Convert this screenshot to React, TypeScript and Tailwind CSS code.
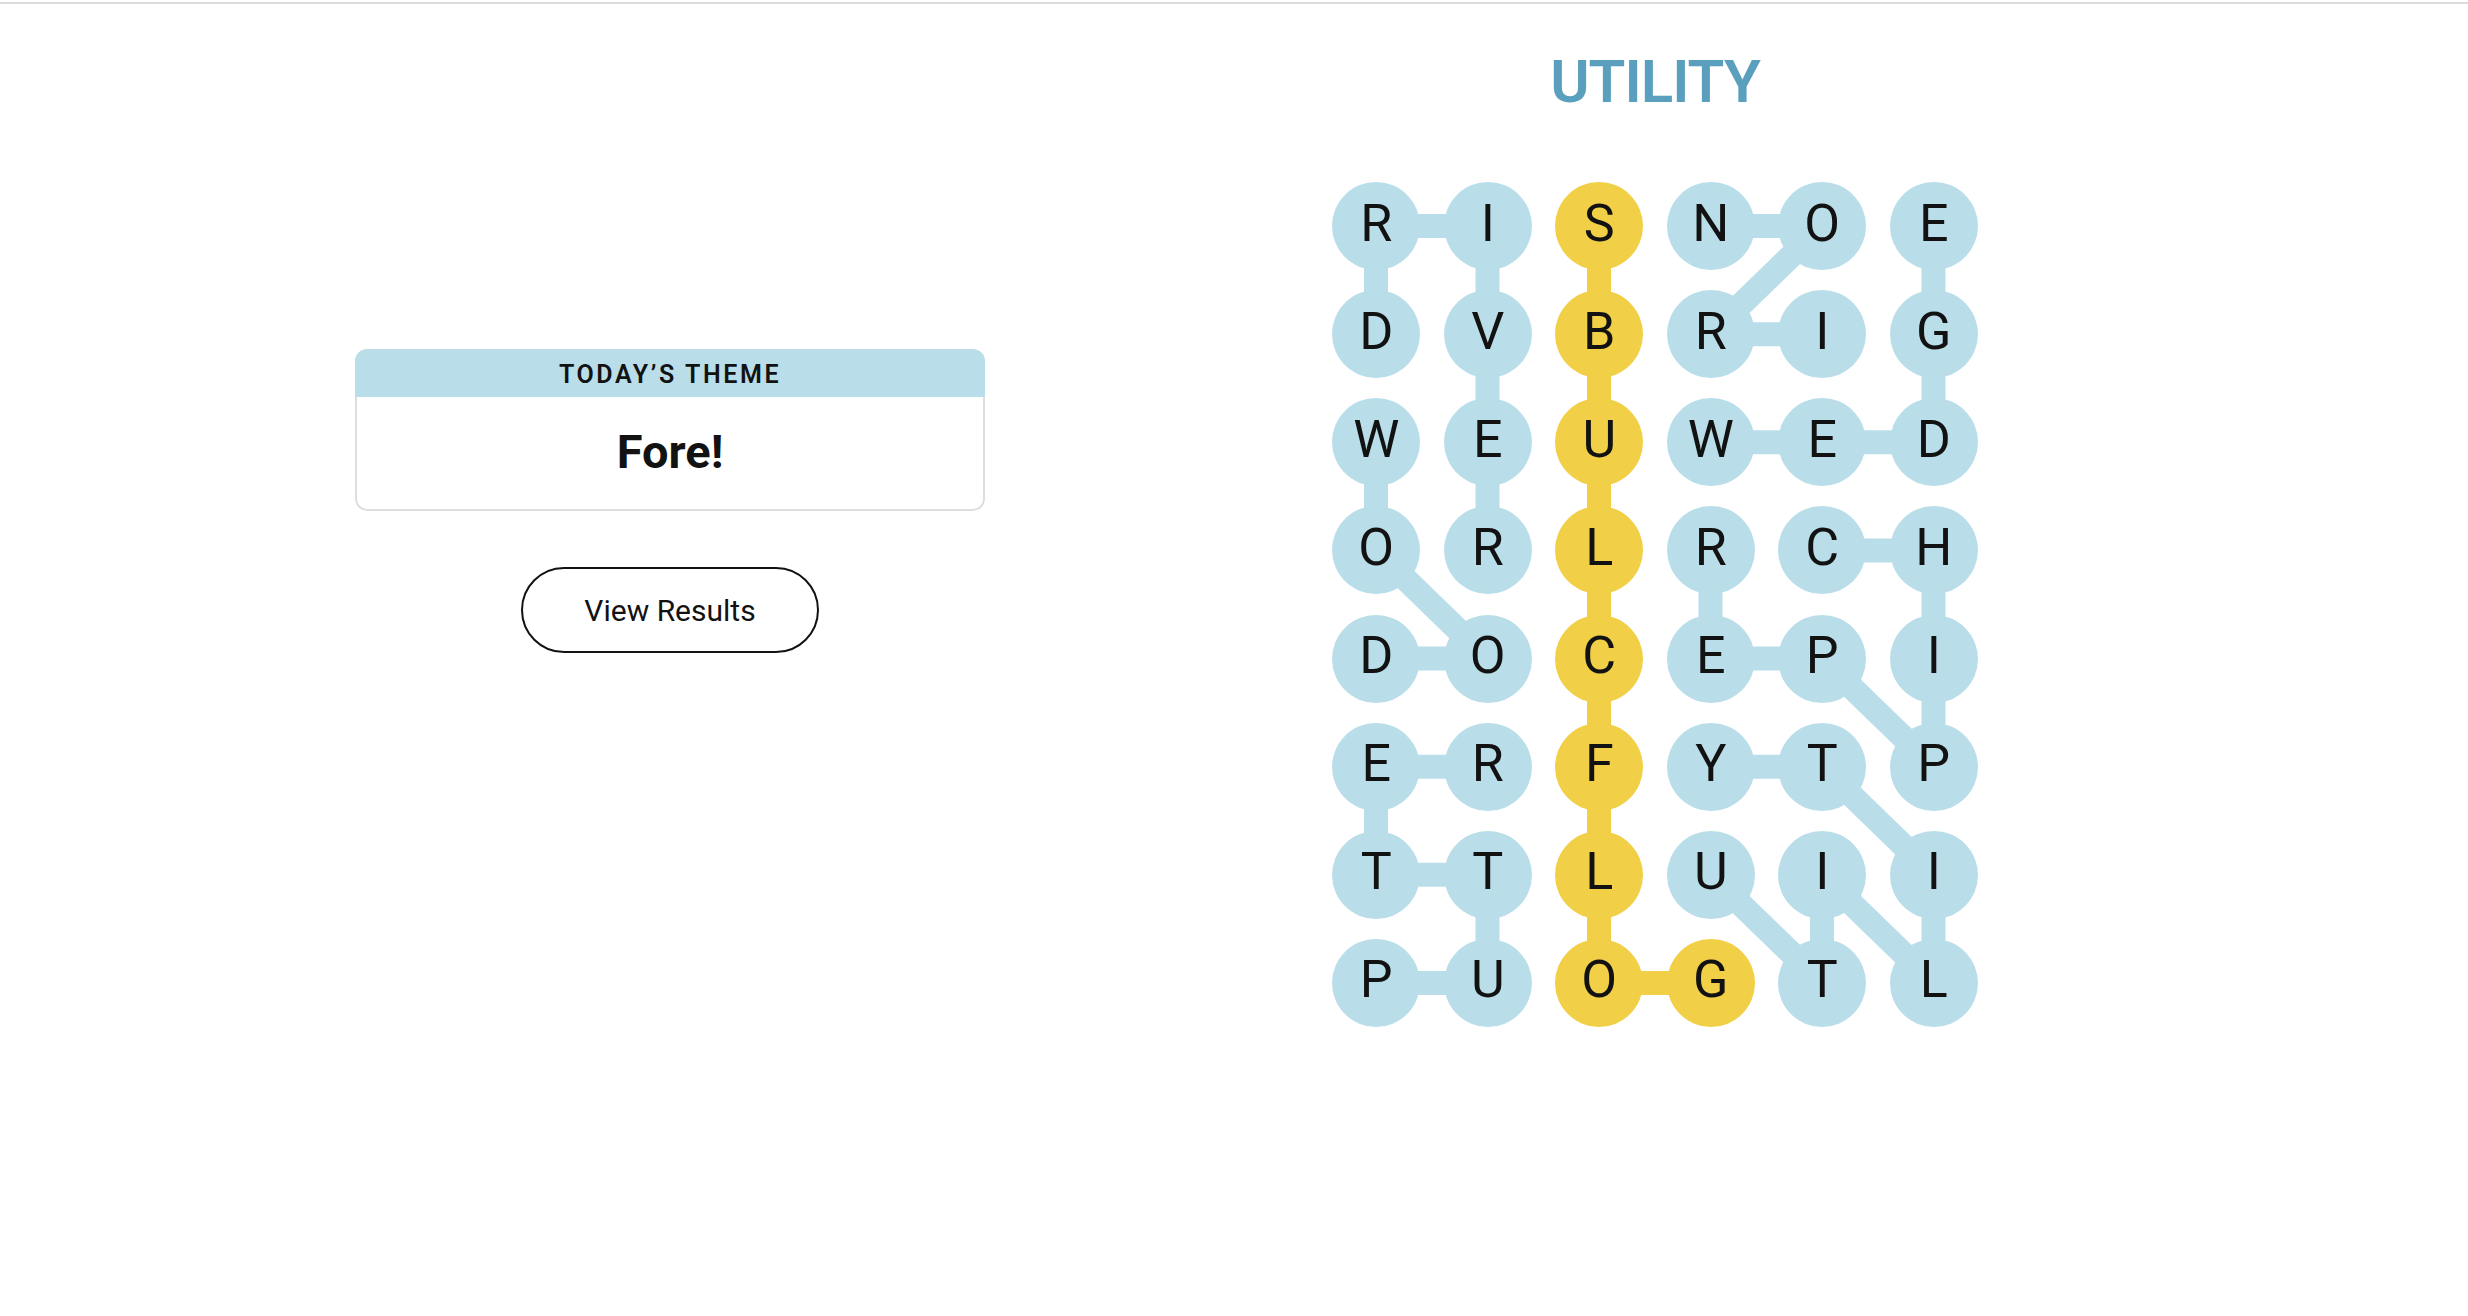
const rows = ["RISNOE", "DVBRIG", "WEUWED", "ORLRCH", "DOCEPI", "ERFYTP", "TTLUII", "PUOGTL"];

const spangram = ["0,2", "1,2", "2,2", "3,2", "4,2", "5,2", "6,2", "7,2", "7,3"];

// [row, col, row, col]
const blueLinks = [
  [1, 0, 0, 0], [0, 0, 0, 1], [0, 1, 1, 1], [1, 1, 2, 1], [2, 1, 3, 1],
  [2, 0, 3, 0], [3, 0, 4, 1], [4, 1, 4, 0],
  [7, 0, 7, 1], [7, 1, 6, 1], [6, 1, 6, 0], [6, 0, 5, 0], [5, 0, 5, 1],
  [1, 4, 1, 3], [1, 3, 0, 4], [0, 4, 0, 3],
  [2, 3, 2, 4], [2, 4, 2, 5], [2, 5, 1, 5], [1, 5, 0, 5],
  [3, 4, 3, 5], [3, 5, 4, 5], [4, 5, 5, 5], [5, 5, 4, 4], [4, 4, 4, 3], [4, 3, 3, 3],
  [6, 3, 7, 4], [7, 4, 6, 4], [6, 4, 7, 5], [7, 5, 6, 5], [6, 5, 5, 4], [5, 4, 5, 3],
];

const yellowLinks = [
  [0, 2, 1, 2], [1, 2, 2, 2], [2, 2, 3, 2], [3, 2, 4, 2],
  [4, 2, 5, 2], [5, 2, 6, 2], [6, 2, 7, 2], [7, 2, 7, 3],
];

const COL = 111.5;
const ROW = 108.14;
const R = 44;

function Board() {
  const px = (c: number) => R + c * COL;
  const py = (r: number) => R + r * ROW;

  return (
    <div className="relative w-[645.5px] h-[845px]">
      <svg className="absolute inset-0" width="645.5" height="845">
        {blueLinks.map(([r1, c1, r2, c2], i) => (
          <line key={"b" + i} x1={px(c1)} y1={py(r1)} x2={px(c2)} y2={py(r2)} stroke="#b9deea" strokeWidth={24} />
        ))}
        {yellowLinks.map(([r1, c1, r2, c2], i) => (
          <line key={"y" + i} x1={px(c1)} y1={py(r1)} x2={px(c2)} y2={py(r2)} stroke="#f1cf46" strokeWidth={24} />
        ))}
      </svg>
      <div className="relative grid grid-cols-[repeat(6,88px)] gap-x-[23.5px] gap-y-[20.14px]">
        {rows.map((row, r) =>
          row.split("").map((ch, c) => (
            <div
              key={r + "-" + c}
              className={
                "w-[88px] h-[88px] rounded-full flex items-center justify-center pb-[5px] text-[52px] leading-none text-[#121212] " +
                (spangram.includes(r + "," + c) ? "bg-[#f1cf46]" : "bg-[#b9deea]")
              }
            >
              {ch}
            </div>
          ))
        )}
      </div>
    </div>
  );
}

export default function App() {
  return (
    <div className="font-['Roboto',sans-serif] bg-white min-h-screen">
      <div className="h-[2px] mt-[2px] bg-[#dcdcdc]" />
      <main className="flex">
        <section className="w-[1300px] pl-[40px] pt-[345px] flex flex-col items-center">
          <div className="w-[630px] rounded-xl overflow-hidden">
            <div className="h-[48px] bg-[#b9deea] flex items-center justify-center pt-[3px] text-[25px] font-semibold tracking-[2.6px] text-[#121212]">
              TODAY’S THEME
            </div>
            <div className="h-[114px] border-x-2 border-b-2 border-[#dedede] rounded-b-xl flex items-center justify-center pb-[3px] text-[47px] font-bold leading-none text-[#121212]">
              Fore!
            </div>
          </div>
          <button className="mt-[56px] w-[298px] h-[86px] rounded-full border-2 border-[#121212] text-[30px] text-[#121212] bg-white">
            View Results
          </button>
        </section>
        <section className="w-[710px] flex flex-col items-center">
          <h1 className="mt-[48px] text-[60px] leading-none font-semibold tracking-[-1px] text-[#5aa0be]">UTILITY</h1>
          <div className="mt-[70px]">
            <Board />
          </div>
        </section>
      </main>
    </div>
  );
}
